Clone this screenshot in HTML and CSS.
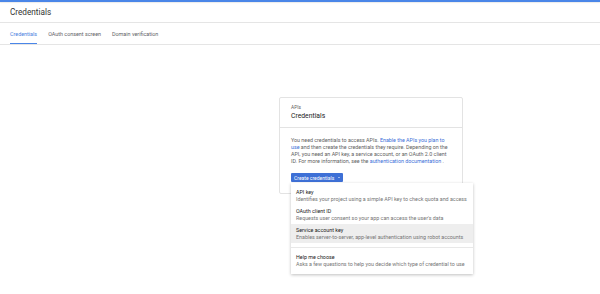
FILE: index.html
```html
<!DOCTYPE html>
<html lang="en">
<head>
  <meta charset="UTF-8">
  <title>Credentials</title>
  <link rel="stylesheet" href="styles.css">
</head>
<body>
  <div class="topbar"></div>
  <header class="page-header">
    <h1>Credentials</h1>
  </header>
  <nav class="tabs">
    <a class="tab active">Credentials</a>
    <a class="tab">OAuth consent screen</a>
    <a class="tab">Domain verification</a>
  </nav>

  <main class="content">
    <div class="card">
      <div class="card-head">
        <div class="eyebrow">APIs</div>
        <h2>Credentials</h2>
      </div>
      <div class="card-body">
        <p>You need credentials to access APIs. <a href="#">Enable the APIs you plan to use</a> and then create the credentials they require. Depending on the API, you need an API key, a service account, or an OAuth 2.0 client ID. For more information, see the <a href="#">authentication documentation</a> .</p>
        <div class="menu-wrap">
          <button class="create-button">Create credentials <span class="caret"></span></button>
          <ul class="menu">
            <li class="menu-item">
              <div class="item-title">API key</div>
              <div class="item-desc">Identifies your project using a simple API key to check quota and access</div>
            </li>
            <li class="menu-item">
              <div class="item-title">OAuth client ID</div>
              <div class="item-desc">Requests user consent so your app can access the user's data</div>
            </li>
            <li class="menu-item hover">
              <div class="item-title">Service account key</div>
              <div class="item-desc">Enables server-to-server, app-level authentication using robot accounts</div>
            </li>
            <li class="divider"></li>
            <li class="menu-item">
              <div class="item-title">Help me choose</div>
              <div class="item-desc">Asks a few questions to help you decide which type of credential to use</div>
            </li>
          </ul>
        </div>
      </div>
    </div>
  </main>
</body>
</html>
```

FILE: styles.css
```css
html, body {
  height: 100%;
}
body {
  margin: 0;
  font-family: Roboto, 'Liberation Sans', sans-serif;
  background: #fff;
  color: #212121;
}
.topbar {
  height: 2px;
  background: #4a86e8;
  box-shadow: 0 1px 1px rgba(0,0,0,0.08);
}
.page-header {
  height: 20px;
  display: flex;
  align-items: center;
  padding-left: 10px;
  border-bottom: 1px solid #e5e5e5;
}
.page-header h1 {
  margin: 0;
  font-size: 8.2px;
  font-weight: 400;
  color: #333;
}
.tabs {
  display: flex;
  gap: 11px;
  height: 21px;
  padding-left: 10px;
  border-bottom: 1px solid #e5e5e5;
}
.tab {
  display: flex;
  align-items: center;
  font-size: 5.4px;
  color: #5f6368;
  border-bottom: 1.5px solid transparent;
  padding-top: 2px;
}
.tab.active {
  color: #4a7fe0;
  border-bottom-color: #4a86e8;
}
.content {
  padding: 52px 0 0 279px;
}
.card {
  width: 184px;
  border: 1px solid #e3e3e3;
  border-radius: 2px;
  box-sizing: border-box;
}
.card-head {
  padding: 6px 10px 5px 11px;
  border-bottom: 1px solid #e3e3e3;
}
.eyebrow {
  font-size: 4.8px;
  color: #616161;
  line-height: 7px;
}
.card-head h2 {
  margin: 0;
  font-size: 6.8px;
  font-weight: 400;
  line-height: 11px;
  color: #212121;
}
.card-body {
  padding: 9px 10px 11px 11px;
}
.card-body p {
  margin: 0 0 8px;
  font-size: 5.35px;
  line-height: 7px;
  color: #616161;
}
.card-body a {
  color: #3b6fd8;
  text-decoration: none;
}
.menu-wrap {
  position: relative;
}
.create-button {
  height: 9px;
  padding: 0 3px;
  border: none;
  border-radius: 1px;
  background: #3e70d6;
  color: #fff;
  font-family: inherit;
  font-size: 5px;
  display: flex;
  align-items: center;
  gap: 4px;
}
.caret {
  width: 0;
  height: 0;
  border-left: 1.5px solid transparent;
  border-right: 1.5px solid transparent;
  border-top: 1.5px solid #fff;
}
.menu {
  position: absolute;
  top: 10px;
  left: 0;
  width: 182px;
  margin: 0;
  padding: 3px 0 4px;
  list-style: none;
  background: #fff;
  box-shadow: 0 1px 3px rgba(0,0,0,0.25);
  z-index: 2;
}
.menu-item {
  padding: 2.5px 5px;
  font-size: 5.35px;
  line-height: 7px;
}
.menu-item.hover {
  background: #eeeeee;
}
.item-title {
  color: #212121;
}
.item-desc {
  color: #757575;
  white-space: nowrap;
}
.divider {
  height: 1px;
  margin: 4px 0 3px;
  background: #e8e8e8;
}
```
